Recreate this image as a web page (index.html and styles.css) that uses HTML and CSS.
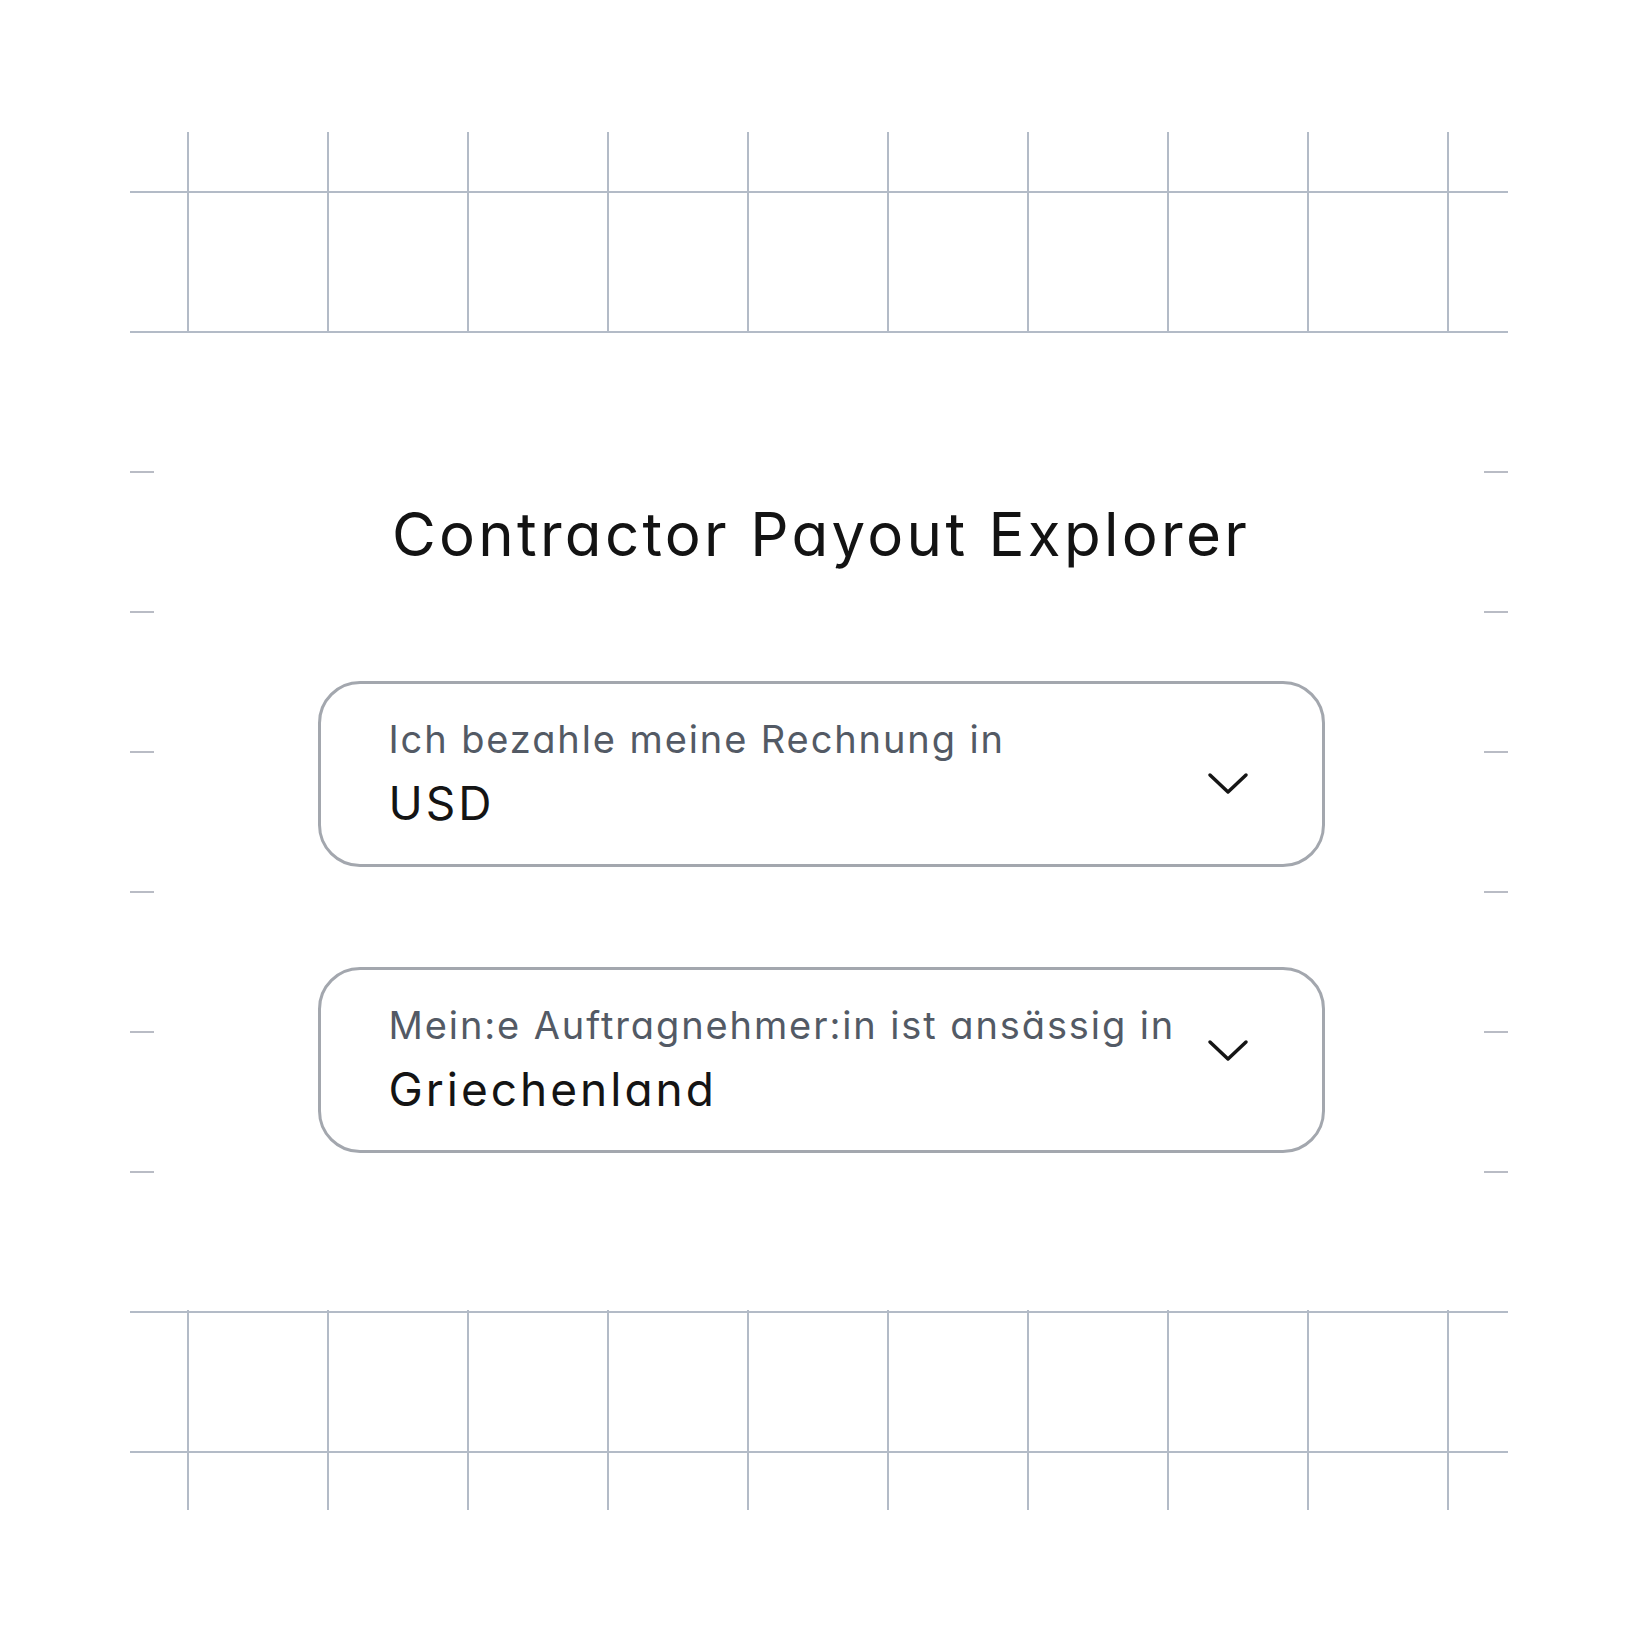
FILE: index.html
```html
<!DOCTYPE html>
<html lang="de">
<head>
  <meta charset="UTF-8">
  <meta name="viewport" content="width=device-width, initial-scale=1.0">
  <title>Contractor Payout Explorer</title>
  <link rel="stylesheet" href="styles.css">
</head>
<body>
  <div class="page">
    <!-- Grid band above -->
    <div class="grid-band grid-band--top"></div>

    <div class="middle">
      <div class="ticks"></div>

      <div class="content">
        <h1 class="title">Contractor Payout Explorer</h1>

        <div class="select select--currency">
          <div class="select-text">
            <div class="select-label">Ich bezahle meine Rechnung in</div>
            <div class="select-value">USD</div>
          </div>
          <svg class="select-chevron" width="44" height="26" viewBox="0 0 44 26" fill="none">
            <path d="M4 4 L22 21 L40 4" stroke="#151515" stroke-width="3.5" stroke-linecap="round" stroke-linejoin="round"/>
          </svg>
        </div>

        <div class="select select--country">
          <div class="select-text">
            <div class="select-label">Mein:e Auftragnehmer:in ist ansässig in</div>
            <div class="select-value">Griechenland</div>
          </div>
          <svg class="select-chevron" width="44" height="26" viewBox="0 0 44 26" fill="none">
            <path d="M4 4 L22 21 L40 4" stroke="#151515" stroke-width="3.5" stroke-linecap="round" stroke-linejoin="round"/>
          </svg>
        </div>
      </div>

      <div class="ticks"></div>
    </div>

    <!-- Grid band below -->
    <div class="grid-band grid-band--bottom"></div>
  </div>
</body>
</html>
```

FILE: styles.css
```css
body {
  font-family: Inter, 'Noto Sans', sans-serif;
  font-feature-settings: "cv11";
  margin: 0;
  background-color: #ffffff;
  color: #141414;
}

.page {
  width: 1378px;
  margin-left: 130px;
  padding-top: 132px;
}

.grid-band {
  height: 200px;
  background-repeat: no-repeat;
}

.grid-band--top {
  height: 201px;
  background-image:
    linear-gradient(to bottom, transparent 59px, #b3bbc7 59px, #b3bbc7 61px, transparent 61px, transparent 199px, #b3bbc7 199px, #b3bbc7 201px),
    repeating-linear-gradient(to right, transparent 0 57px, #b3bbc7 57px 59px, transparent 59px 140px);
}

.grid-band--bottom {
  background-image:
    linear-gradient(to bottom, transparent 1px, #b3bbc7 1px, #b3bbc7 3px, transparent 3px, transparent 141px, #b3bbc7 141px, #b3bbc7 143px, transparent 143px),
    repeating-linear-gradient(to right, transparent 0 57px, #b3bbc7 57px 59px, transparent 59px 140px);
}

.middle {
  display: flex;
  justify-content: space-between;
  height: 977px;
}

.ticks {
  width: 24px;
  background-image: repeating-linear-gradient(to bottom, transparent 0 138px, #b9bcc5 138px 140px);
}

.content {
  display: flex;
  flex-direction: column;
  align-items: center;
  padding-top: 165px;
  padding-left: 4px;
}

.title {
  margin: 0 0 111px;
  font-size: 60px;
  line-height: 72px;
  font-weight: 400;
  letter-spacing: 3.3px;
  color: #131313;
}

.select {
  box-sizing: border-box;
  width: 1007px;
  display: flex;
  justify-content: space-between;
  align-items: flex-start;
  padding: 33px 72px 33px 68px;
  border: 3px solid #a3a7ae;
  border-radius: 42px;
  margin-bottom: 100px;
}

.select-text {
  display: flex;
  flex-direction: column;
  gap: 14px;
}

.select-label {
  font-size: 38px;
  line-height: 44px;
  letter-spacing: 1.9px;
  color: #535a65;
}

.select-value {
  font-size: 46px;
  line-height: 56px;
  letter-spacing: 3px;
  color: #141414;
}

.select--currency .select-chevron {
  margin-top: 54px;
}

.select--country .select-chevron {
  margin-top: 35px;
}
```
